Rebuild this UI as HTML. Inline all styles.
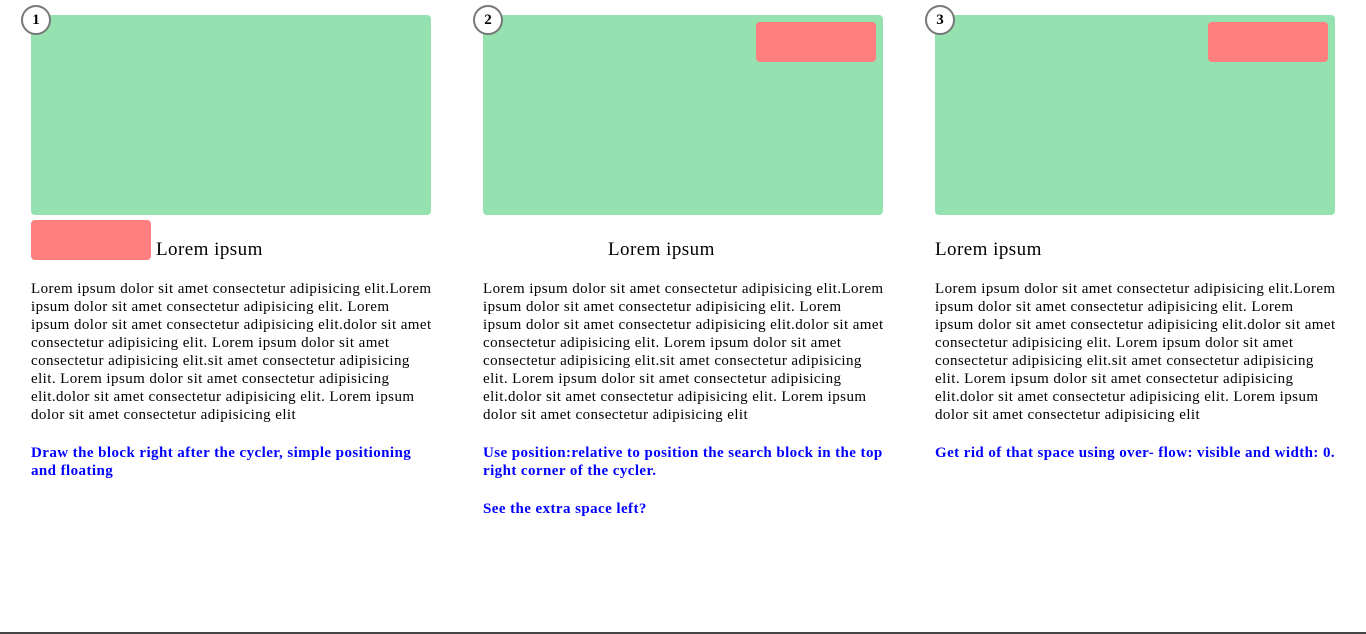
<!DOCTYPE html>
<html><head><meta charset="utf-8"><style>
*{margin:0;padding:0;box-sizing:border-box}
html,body{width:1366px;height:634px;overflow:hidden;background:#fff;font-family:"Liberation Serif",serif;position:relative}
.col{position:absolute;top:0;width:400px;height:634px}
.g{position:absolute;left:0;top:15px;width:400px;height:200px;background:#95e1b0;border-radius:4px}
.r{position:absolute;width:120px;height:40px;background:#ff7f7f;border-radius:4px}
.n{position:absolute;left:-10px;top:5px;width:30px;height:30px;border:2px solid #777;border-radius:50%;background:#fff;font:bold 15px "Liberation Serif",serif;text-align:center;line-height:26px;color:#000}
h2{position:absolute;top:239px;font-weight:normal;font-size:19px;line-height:22px;white-space:nowrap;letter-spacing:0.45px}
.p{position:absolute;left:0;top:280px;font-size:15px;line-height:18px;white-space:nowrap;color:#000;letter-spacing:0.42px}
.b{position:absolute;left:0;font-size:15px;line-height:18px;font-weight:bold;color:#0000ff;white-space:nowrap;letter-spacing:0.42px}
.line{position:absolute;left:0;top:632px;width:1366px;height:2px;background:#444}
</style></head><body>
<div class="col" style="left:31px">
<div class="g"></div><div class="n">1</div>
<div class="r" style="left:0;top:220px"></div>
<h2 style="left:125px">Lorem ipsum</h2>
<div class="p">Lorem ipsum dolor sit amet consectetur adipisicing elit.Lorem<br>ipsum dolor sit amet consectetur adipisicing elit. Lorem<br>ipsum dolor sit amet consectetur adipisicing elit.dolor sit amet<br>consectetur adipisicing elit. Lorem ipsum dolor sit amet<br>consectetur adipisicing elit.sit amet consectetur adipisicing<br>elit. Lorem ipsum dolor sit amet consectetur adipisicing<br>elit.dolor sit amet consectetur adipisicing elit. Lorem ipsum<br>dolor sit amet consectetur adipisicing elit</div>
<div class="b" style="top:444px">Draw the block right after the cycler, simple positioning<br>and floating</div>
</div>
<div class="col" style="left:483px">
<div class="g"></div><div class="n">2</div>
<div class="r" style="left:273px;top:22px"></div>
<h2 style="left:125px">Lorem ipsum</h2>
<div class="p">Lorem ipsum dolor sit amet consectetur adipisicing elit.Lorem<br>ipsum dolor sit amet consectetur adipisicing elit. Lorem<br>ipsum dolor sit amet consectetur adipisicing elit.dolor sit amet<br>consectetur adipisicing elit. Lorem ipsum dolor sit amet<br>consectetur adipisicing elit.sit amet consectetur adipisicing<br>elit. Lorem ipsum dolor sit amet consectetur adipisicing<br>elit.dolor sit amet consectetur adipisicing elit. Lorem ipsum<br>dolor sit amet consectetur adipisicing elit</div>
<div class="b" style="top:444px">Use position:relative to position the search block in the top<br>right corner of the cycler.</div>
<div class="b" style="top:500px">See the extra space left?</div>
</div>
<div class="col" style="left:935px">
<div class="g"></div><div class="n">3</div>
<div class="r" style="left:273px;top:22px"></div>
<h2 style="left:0">Lorem ipsum</h2>
<div class="p">Lorem ipsum dolor sit amet consectetur adipisicing elit.Lorem<br>ipsum dolor sit amet consectetur adipisicing elit. Lorem<br>ipsum dolor sit amet consectetur adipisicing elit.dolor sit amet<br>consectetur adipisicing elit. Lorem ipsum dolor sit amet<br>consectetur adipisicing elit.sit amet consectetur adipisicing<br>elit. Lorem ipsum dolor sit amet consectetur adipisicing<br>elit.dolor sit amet consectetur adipisicing elit. Lorem ipsum<br>dolor sit amet consectetur adipisicing elit</div>
<div class="b" style="top:444px">Get rid of that space using over- flow: visible and width: 0.</div>
</div>
<div class="line"></div>
</body></html>
